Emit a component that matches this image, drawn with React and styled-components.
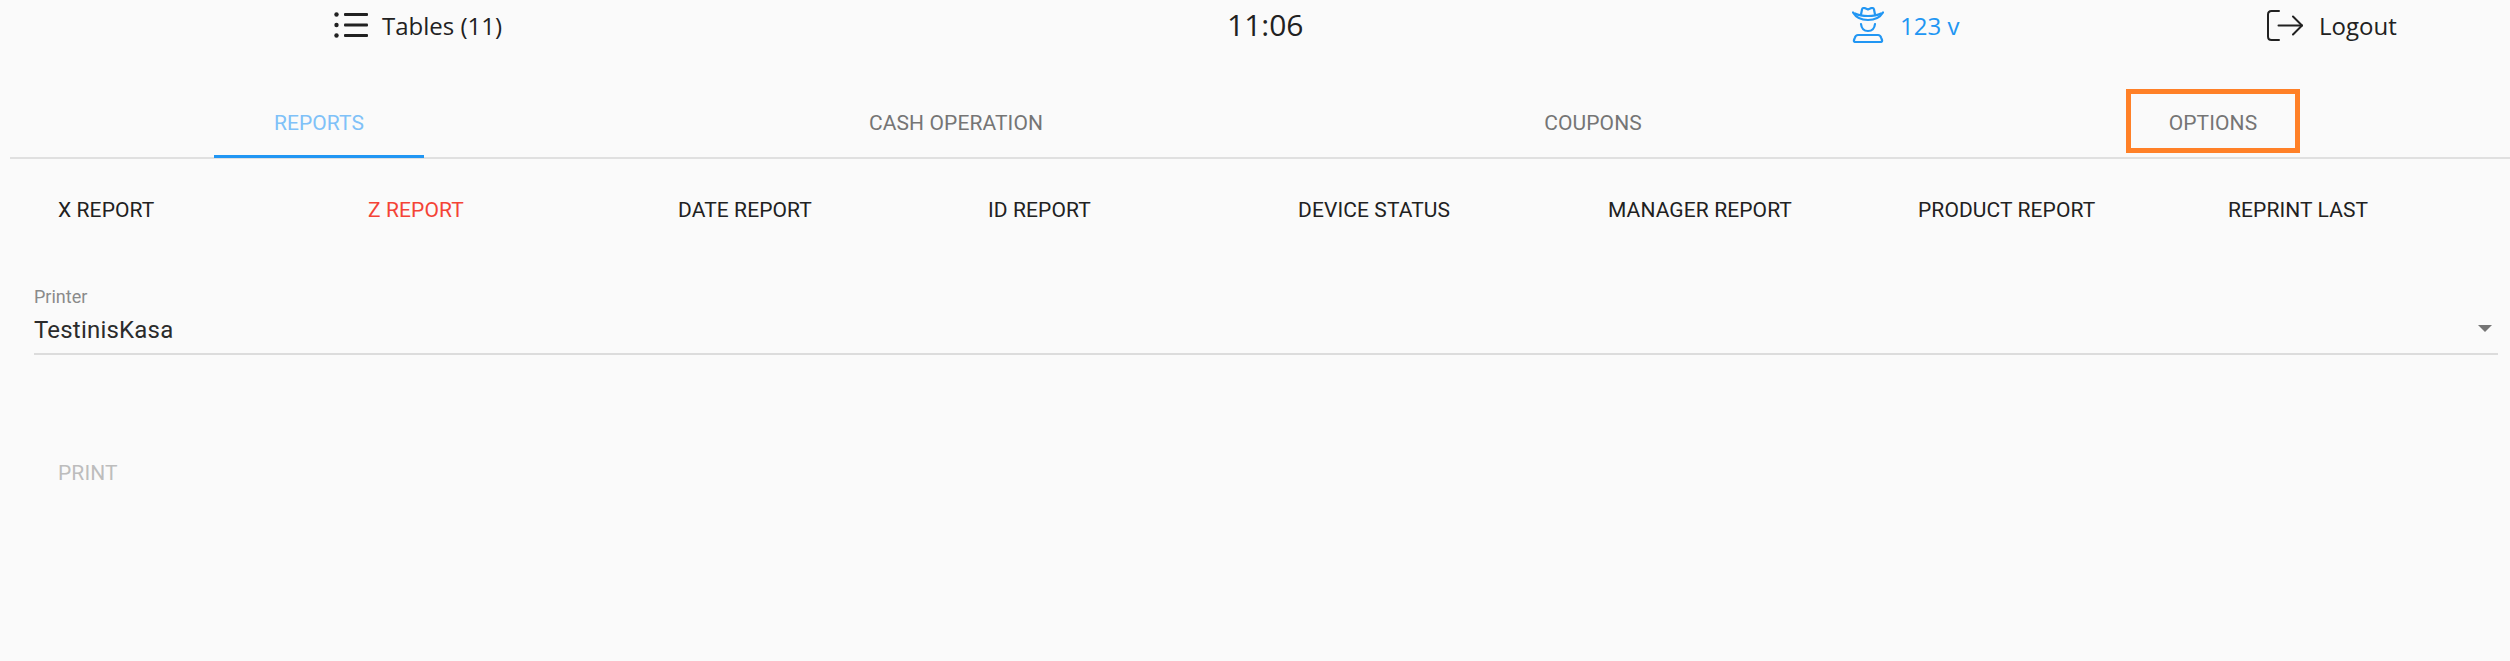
import styled, { createGlobalStyle } from "styled-components";

const Global = createGlobalStyle`
  html, body { margin: 0; padding: 0; background: #fafafa; }
  body { font-family: "Roboto", sans-serif; overflow: hidden; }
`;

const Page = styled.div`
  width: 2510px;
  height: 661px;
  background: #fafafa;
  overflow: hidden;
`;

const Header = styled.header`
  display: grid;
  grid-template-columns: 893px 625px 415px 1fr;
  align-items: center;
  height: 52px;
  box-sizing: border-box;
  padding: 0 0 2px 334px;
  font-family: "Open Sans", sans-serif;
  font-size: 24px;
  color: #212121;
`;

const HeaderItem = styled.div`
  display: flex;
  align-items: center;
  gap: ${(p) => p.$gap || 13}px;
  color: ${(p) => p.$color || "#212121"};
  white-space: nowrap;
`;

const Clock = styled.div`
  font-size: 30px;
  line-height: 50px;
`;

const Tabs = styled.nav`
  display: grid;
  grid-template-columns: 637px 637px 620px 210px;
  height: 107px;
  margin-left: 10px;
  padding-left: 204px;
  border-bottom: 2px solid #e0e0e0;
  box-sizing: border-box;
`;

const TabCell = styled.div`
  display: flex;
`;

const Tab = styled.div`
  position: relative;
  width: 210px;
  height: 106px;
  padding-top: 39px;
  box-sizing: border-box;
  display: flex;
  align-items: center;
  justify-content: center;
  font-size: 21px;
  font-weight: 400;
  letter-spacing: 0.1px;
  color: ${(p) => (p.$active ? "#7fc1f8" : "#757575")};
  border-bottom: 3px solid ${(p) => (p.$active ? "#2196f3" : "transparent")};
`;

const Highlight = styled.div`
  position: absolute;
  left: 18px;
  top: 37px;
  width: 174px;
  height: 64px;
  box-sizing: border-box;
  border: 5px solid #ff8027;
`;

const ReportRow = styled.div`
  display: grid;
  grid-template-columns: repeat(8, 310px);
  padding: 36px 0 0 58px;
`;

const ReportButton = styled.div`
  font-size: 21px;
  line-height: 30px;
  font-weight: 400;
  letter-spacing: 0.1px;
  white-space: nowrap;
  color: ${(p) => (p.$danger ? "#f44336" : "#212121")};
`;

const Field = styled.div`
  position: relative;
  margin: 62px 12px 0 34px;
  height: 66px;
  border-bottom: 2px solid #dcdcdc;
`;

const FieldLabel = styled.div`
  font-size: 18px;
  line-height: 20px;
  color: #8a8a8a;
`;

const FieldValue = styled.div`
  font-size: 24px;
  line-height: 30px;
  margin-top: 8px;
  letter-spacing: 0.2px;
  color: #2b2b2b;
`;

const Caret = styled.div`
  position: absolute;
  right: 6px;
  top: 38px;
  border-style: solid;
  border-width: 7px 7px 0;
  border-color: #757575 transparent transparent;
`;

const PrintButton = styled.div`
  margin: 103px 0 0 58px;
  font-size: 21px;
  line-height: 30px;
  font-weight: 400;
  letter-spacing: 0.1px;
  color: #bdbdbd;
`;

function ListIcon() {
  return (
    <svg width="35" height="26" viewBox="0 0 35 26">
      <g fill="#212121">
        <circle cx="2.5" cy="2.500" r="2.2" />
        <circle cx="2.5" cy="13" r="2.2" />
        <circle cx="2.5" cy="23.500" r="2.2" />
        <rect x="10" y="1" width="24" height="3" rx="1" />
        <rect x="10" y="11.500" width="24" height="3" rx="1" />
        <rect x="10" y="22" width="24" height="3" rx="1" />
      </g>
    </svg>
  );
}

function HatIcon() {
  return (
    <svg width="32" height="36" viewBox="0 0 32 36" fill="none" stroke="#2196f3" strokeWidth="2.2" strokeLinecap="round" strokeLinejoin="round">
      <path d="M1 5.500C4 10.500 9 13 16 13s12-2.500 15-7.500" />
      <path d="M9 7.500l1-5c.3-1.500 2-2 3.200-1.200L16 2.500l2.800-1.200C20 .5 21.700 1 22 2.500l1 5" />
      <path d="M3 6.500C7 8.500 11 9 16 9s9-.5 13-2.500" />
      <path d="M9 17c.5 4.500 3 7 7 7s6.500-2.500 7-7" />
      <path d="M6 28h20c1.600 0 2.700 1.200 3.200 2.800l.8 2.200c.4 1.200-.4 2-1.500 2h-25c-1.100 0-1.900-.8-1.500-2l.8-2.200C3.300 29.200 4.400 28 6 28z" />
    </svg>
  );
}

function LogoutIcon() {
  return (
    <svg width="36" height="31" viewBox="0 0 36 31" fill="none" stroke="#212121" strokeWidth="2" strokeLinecap="round" strokeLinejoin="round">
      <path d="M12 1H4.500C2.500 1 1 2.500 1 4.500v22C1 28.500 2.500 30 4.500 30H12" />
      <path d="M11.500 15.500H35" />
      <path d="M26 6.500l9 9-9 9" />
    </svg>
  );
}

const reports = ["X REPORT", "Z REPORT", "DATE REPORT", "ID REPORT", "DEVICE STATUS", "MANAGER REPORT", "PRODUCT REPORT", "REPRINT LAST"];

export default function App() {
  return (
    <Page>
      <Global />
      <Header>
        <HeaderItem>
          <ListIcon />
          Tables (11)
        </HeaderItem>
        <Clock>11:06</Clock>
        <HeaderItem $color="#2196f3" $gap={16}>
          <HatIcon />
          123 v
        </HeaderItem>
        <HeaderItem $gap={16}>
          <LogoutIcon />
          Logout
        </HeaderItem>
      </Header>
      <Tabs>
        <TabCell><Tab $active>REPORTS</Tab></TabCell>
        <TabCell><Tab>CASH OPERATION</Tab></TabCell>
        <TabCell><Tab>COUPONS</Tab></TabCell>
        <TabCell>
          <Tab>
            OPTIONS
            <Highlight />
          </Tab>
        </TabCell>
      </Tabs>
      <ReportRow>
        {reports.map((r) => (
          <ReportButton key={r} $danger={r === "Z REPORT"}>{r}</ReportButton>
        ))}
      </ReportRow>
      <Field>
        <FieldLabel>Printer</FieldLabel>
        <FieldValue>TestinisKasa</FieldValue>
        <Caret />
      </Field>
      <PrintButton>PRINT</PrintButton>
    </Page>
  );
}
